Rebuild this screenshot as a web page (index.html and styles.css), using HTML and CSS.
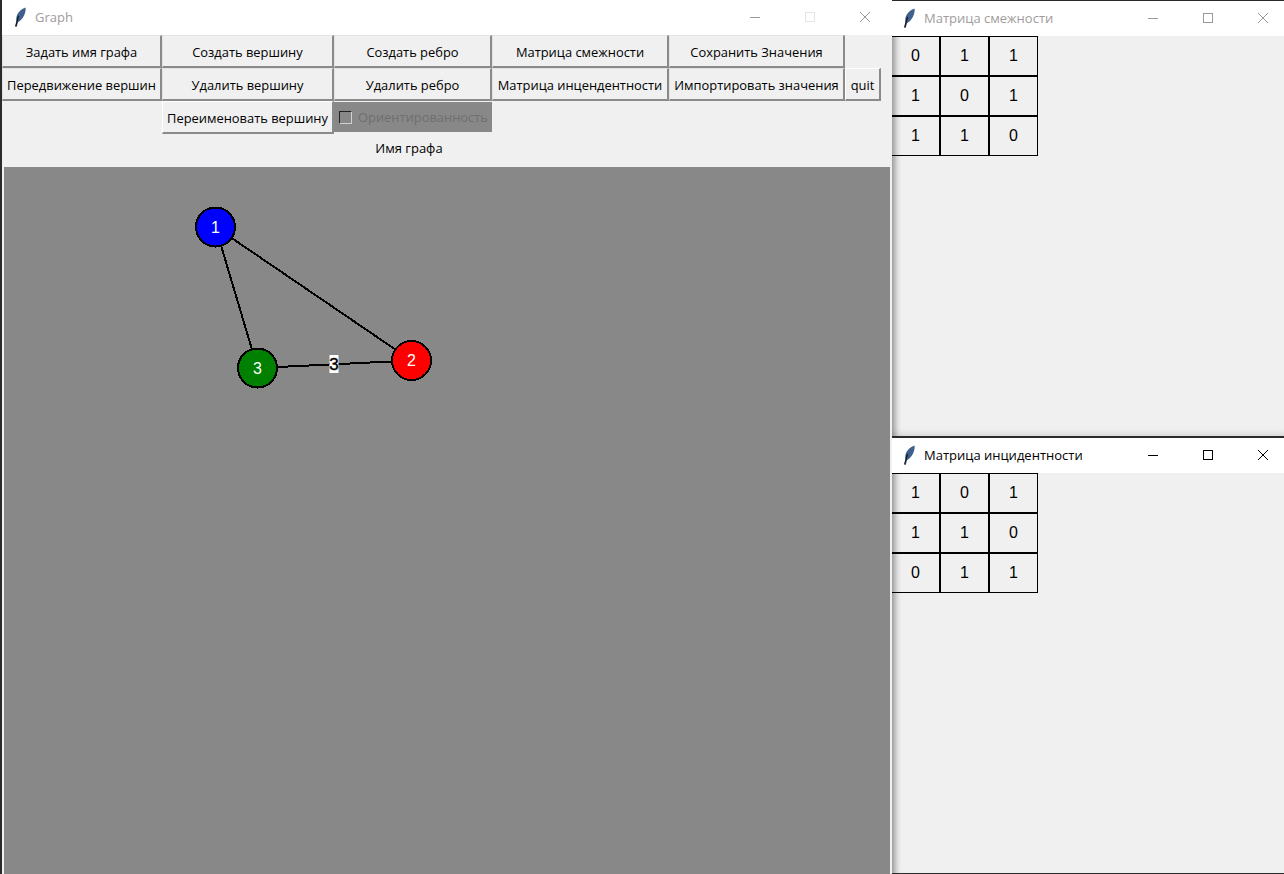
FILE: index.html
```html
<!DOCTYPE html>
<html lang="en">
<head>
    <meta charset="utf-8">
    <title>Graph</title>
    <link rel="stylesheet" href="styles.css">
</head>
<body>
    <svg width="0" height="0" class="defs">
        <symbol id="feather" viewBox="0 0 14 20">
            <path d="M12.5 0.5C8 2 4.5 5.5 3.5 10C3 12.5 3.2 14 3.8 15L2.6 19.5L3.8 19.7L5 15.2C8.5 13.5 11 9.5 12 6C12.6 4 12.8 2 12.5 0.5Z" fill="#3f5f8c"/>
            <path d="M2.6 19.5L5.5 9" stroke="#10141c" stroke-width="1.2" fill="none"/>
        </symbol>
    </svg>

    <div class="main-window">
        <div class="titlebar titlebar-main inactive">
            <svg class="feather"><use href="#feather"/></svg>
            <span class="title">Graph</span>
            <span class="win-buttons">
                <svg class="win-btn" viewBox="0 0 12 12"><path d="M1 6.5H11"/></svg>
                <svg class="win-btn disabled" viewBox="0 0 12 12"><rect x="1.5" y="1.5" width="9" height="9"/></svg>
                <svg class="win-btn" viewBox="0 0 12 12"><path d="M1 1L11 11M11 1L1 11"/></svg>
            </span>
        </div>
        <div class="content">
            <div class="toolbar">
                <button>Задать имя графа</button>
                <button>Создать вершину</button>
                <button>Создать ребро</button>
                <button>Матрица смежности</button>
                <button>Сохранить Значения</button>
                <span></span>

                <button>Передвижение вершин</button>
                <button>Удалить вершину</button>
                <button>Удалить ребро</button>
                <button>Матрица инцендентности</button>
                <button>Импортировать значения</button>
                <button class="quit">quit</button>

                <span></span>
                <button class="raised">Переименовать вершину</button>
                <label class="check"><i class="box"></i>Ориентированность</label>
            </div>
            <div class="graph-name">Имя графа</div>
            <svg class="canvas" viewBox="4 167 886 707" width="886" height="707">
                <g class="edges">
                    <line x1="215.5" y1="227" x2="411.5" y2="360.5"/>
                    <line x1="215.5" y1="227" x2="257.5" y2="368"/>
                    <line x1="257.5" y1="368" x2="411.5" y2="360.5"/>
                </g>
                <g class="edge-label">
                    <rect x="329.5" y="355" width="9" height="18"/>
                    <text x="334" y="370">3</text>
                </g>
                <g class="node">
                    <circle cx="215.5" cy="227" r="19.5" fill="#0000ff"/>
                    <text x="215.5" y="233">1</text>
                </g>
                <g class="node">
                    <circle cx="411.5" cy="360.5" r="19.5" fill="#ff0000"/>
                    <text x="411.5" y="366">2</text>
                </g>
                <g class="node">
                    <circle cx="257.5" cy="368" r="19.5" fill="#008000"/>
                    <text x="257.5" y="374">3</text>
                </g>
            </svg>
        </div>
    </div>

    <div class="side">
        <div class="side-window first">
            <div class="titlebar inactive">
                <svg class="feather"><use href="#feather"/></svg>
                <span class="title">Матрица смежности</span>
                <span class="win-buttons">
                    <svg class="win-btn" viewBox="0 0 12 12"><path d="M1 6.5H11"/></svg>
                    <svg class="win-btn" viewBox="0 0 12 12"><rect x="1.5" y="1.5" width="9" height="9"/></svg>
                    <svg class="win-btn" viewBox="0 0 12 12"><path d="M1 1L11 11M11 1L1 11"/></svg>
                </span>
            </div>
            <div class="matrix-area">
                <div class="matrix">
                    <div>0</div><div>1</div><div>1</div>
                    <div>1</div><div>0</div><div>1</div>
                    <div>1</div><div>1</div><div>0</div>
                </div>
            </div>
        </div>
        <div class="side-window second">
            <div class="titlebar">
                <svg class="feather"><use href="#feather"/></svg>
                <span class="title">Матрица инцидентности</span>
                <span class="win-buttons">
                    <svg class="win-btn" viewBox="0 0 12 12"><path d="M1 6.5H11"/></svg>
                    <svg class="win-btn" viewBox="0 0 12 12"><rect x="1.5" y="1.5" width="9" height="9"/></svg>
                    <svg class="win-btn" viewBox="0 0 12 12"><path d="M1 1L11 11M11 1L1 11"/></svg>
                </span>
            </div>
            <div class="matrix-area">
                <div class="matrix">
                    <div>1</div><div>0</div><div>1</div>
                    <div>1</div><div>1</div><div>0</div>
                    <div>0</div><div>1</div><div>1</div>
                </div>
            </div>
        </div>
    </div>
</body>
</html>
```

FILE: styles.css
```css
html, body {
    height: 100%;
}
body {
    margin: 0;
    display: flex;
    width: 1284px;
    height: 874px;
    overflow: hidden;
    background: #2b2b2b;
    font-family: "Open Sans", "Noto Sans", sans-serif;
    font-size: 12.9px;
    color: #000;
}
.defs {
    position: absolute;
}
.main-window {
    width: 890px;
    margin-left: 2px;
    flex: none;
    display: flex;
    flex-direction: column;
    background: #f0f0f0;
}
.titlebar {
    height: 35px;
    box-sizing: border-box;
    flex: none;
    display: flex;
    align-items: center;
    background: #fff;
    padding: 0 15px 2px 10px;
    font-size: 13px;
}
.titlebar-main {
    padding: 0 21px 2px 11px;
}
.feather {
    width: 14px;
    height: 20px;
    margin-right: 8px;
    flex: none;
}
.inactive .title {
    color: #a09c9c;
}
.win-buttons {
    margin-left: auto;
    display: flex;
    gap: 43px;
}
.win-btn {
    width: 12px;
    height: 12px;
    fill: none;
    stroke: #000;
    stroke-width: 1;
}
.inactive .win-btn {
    stroke: #9a9a9a;
}
.inactive .win-btn.disabled {
    stroke: #e4e4e4;
}
.content {
    flex: 1;
    display: flex;
    flex-direction: column;
    min-height: 0;
}
.toolbar {
    display: grid;
    grid-template-columns: 160px 172px 158px 177px 176px 36px;
    grid-template-rows: 33px 33px 33px;
}
.toolbar button {
    margin: 0;
    padding: 2px 0 0;
    font: inherit;
    color: #000;
    background: #f0f0f0;
    border: 1px solid;
    border-color: #e2e2e2 #8a8a8a #8a8a8a #e2e2e2;
    border-bottom-width: 2px;
    border-right-width: 2px;
    white-space: nowrap;
}
.toolbar .quit,
.toolbar .raised {
    border-color: #fff #8a8a8a #8a8a8a #fff;
}
.check {
    display: flex;
    align-items: center;
    background: #888;
    color: #6f6f6f;
    height: 30px;
    margin-top: 1px;
    padding-left: 5px;
}
.box {
    width: 11px;
    height: 11px;
    margin-right: 6px;
    border: 1px solid;
    border-color: #222 #d0d0d0 #d0d0d0 #222;
    background: #888;
}
.graph-name {
    height: 33px;
    width: 814px;
    flex: none;
    text-align: center;
    line-height: 29px;
    font-size: 13px;
}
.canvas {
    display: block;
    margin-left: 2px;
    flex: none;
    background: #888;
}
.edges line {
    stroke: #000;
    stroke-width: 2;
    shape-rendering: crispEdges;
}
.edge-label rect {
    fill: #fff;
}
.edge-label text {
    font-family: "Liberation Sans", sans-serif;
    font-size: 17px;
    text-anchor: middle;
    fill: #000;
    stroke: #000;
    stroke-width: 0.4;
}
.node circle {
    stroke: #000;
    stroke-width: 2;
    shape-rendering: crispEdges;
}
.node text {
    font-family: "Liberation Sans", sans-serif;
    font-size: 16px;
    text-anchor: middle;
    fill: #fff;
}
.side {
    width: 392px;
    flex: none;
    display: flex;
    flex-direction: column;
}
.side-window {
    display: flex;
    flex-direction: column;
    background: #f0f0f0;
    overflow: hidden;
}
.side-window.first {
    margin-top: 1px;
    height: 435px;
}
.side-window.second {
    margin-top: 2px;
    height: 435px;
}
.matrix-area {
    flex: 1;
    display: flex;
    align-items: flex-start;
    box-shadow: inset 9px 0 6px -6px rgba(0, 0, 0, 0.4), inset 0 -8px 6px -6px rgba(0, 0, 0, 0.12);
}
.second .matrix-area {
    box-shadow: inset 9px 0 6px -6px rgba(0, 0, 0, 0.4);
}
.matrix {
    display: grid;
    grid-template-columns: 49px 49px 49px;
    grid-template-rows: 40px 40px 40px;
    margin-left: -1px;
    font-family: "Liberation Sans", sans-serif;
    font-size: 16px;
}
.matrix div {
    display: flex;
    align-items: center;
    justify-content: center;
    border: 1px solid #000;
}
```
